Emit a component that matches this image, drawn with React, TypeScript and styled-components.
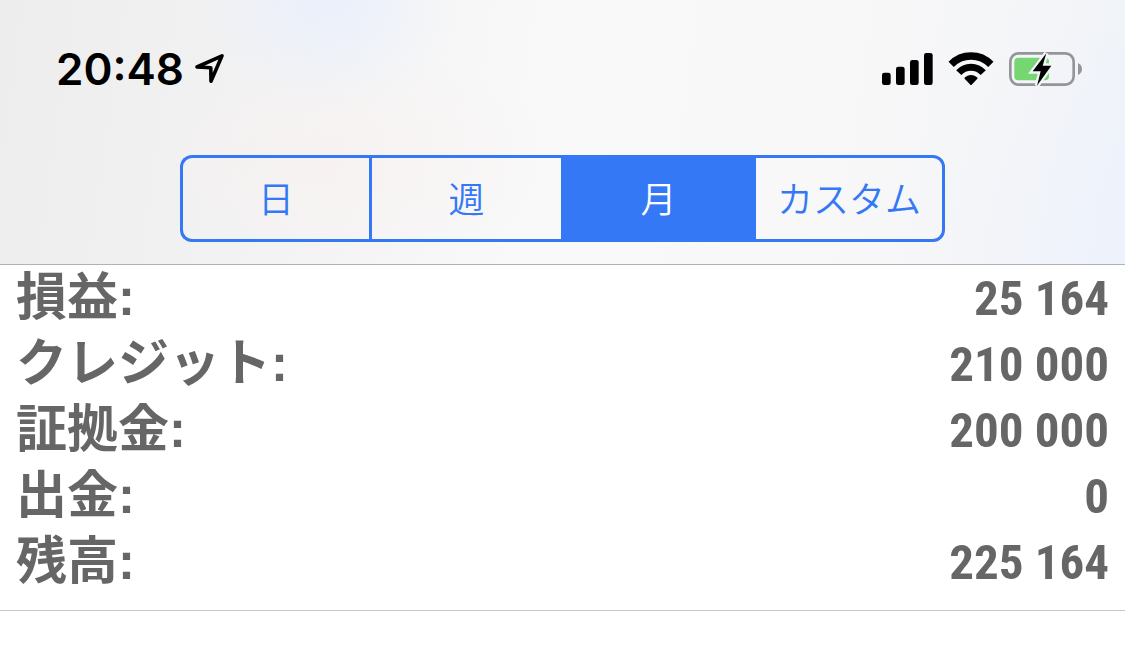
import React, { useState } from "react";
import styled, { createGlobalStyle, css } from "styled-components";

const BLUE = "#3478f6";

const GlobalStyle = createGlobalStyle`
  *, *::before, *::after { box-sizing: border-box; }
  body { margin: 0; background: #fff; }
`;

const Header = styled.header`
  height: 265px;
  border-bottom: 1px solid #b2b2b2;
  background:
    radial-gradient(ellipse 130px 110px at 330px 0, rgba(230, 238, 255, 0.7), transparent),
    radial-gradient(ellipse 220px 110px at 340px 160px, rgba(250, 240, 237, 0.5), transparent),
    radial-gradient(ellipse 200px 260px at 100% 100%, rgba(236, 241, 253, 0.6), transparent),
    linear-gradient(98deg, #ededed 0%, #f2f2f3 22%, #f9f9f9 48%, #f8f8f8 72%, #f4f5f8 90%, #eff3f9 100%);
`;

const StatusBar = styled.div`
  display: flex;
  align-items: center;
  justify-content: space-between;
  height: 155px;
  padding: 0 42px 17px 56px;
`;

const StatusGroup = styled.div<{ $gap: number }>`
  display: flex;
  align-items: center;
  gap: ${(p) => p.$gap}px;
`;

const Clock = styled.time`
  font: 600 44px/54px Inter, sans-serif;
  color: #000;
`;

const Segments = styled.div`
  display: grid;
  grid-template-columns: 63fr 64fr 64fr 64fr;
  width: 68%;
  height: 87px;
  margin: 0 auto;
`;

const Segment = styled.button<{ $active: boolean }>`
  padding: 0 0 4px;
  border: 3px solid ${BLUE};
  border-right-width: 0;
  background: transparent;
  color: ${BLUE};
  font: 350 36px/48px "Noto Sans CJK JP", sans-serif;
  cursor: pointer;

  &:first-child { border-radius: 12px 0 0 12px; }
  &:last-child { border-right-width: 3px; border-radius: 0 12px 12px 0; }

  ${(p) => p.$active && css`
    background: ${BLUE};
    color: #fff;
  `}
`;

const Summary = styled.dl`
  margin: 0;
  padding: 0 16px 15px;
  border-bottom: 1px solid #c8c7cc;
  background: #fff;
  color: #666;
`;

const SummaryRow = styled.div`
  display: flex;
  align-items: baseline;
  justify-content: space-between;
  height: 66px;
`;

const Label = styled.dt`
  font: 700 51px/66px "Liberation Sans", "Noto Sans CJK JP", sans-serif;
`;

const Amount = styled.dd`
  margin: 0;
  font: 700 49px/66px "Roboto Condensed", "Liberation Sans Narrow", "Liberation Sans", sans-serif;
`;

const LocationIcon = () => (
  <svg width="32" height="32" viewBox="0 0 32 32" aria-hidden="true">
    <path d="M4 14 29 2.8 18 28.2 17.8 14.8Z" fill="none" stroke="#000" strokeWidth="3.6" strokeLinejoin="round" />
  </svg>
);

const SignalIcon = () => (
  <svg width="51" height="34" viewBox="0 0 153 102" role="img" aria-label="Signal">
    <rect x="0" y="62" width="26" height="37" rx="7" />
    <rect x="42" y="44" width="26" height="55" rx="7" />
    <rect x="84" y="24" width="26" height="75" rx="7" />
    <rect x="126" y="3" width="26" height="96" rx="7" />
  </svg>
);

const WifiIcon = () => (
  <svg width="46" height="34" viewBox="0 0 138 102" role="img" aria-label="Wi-Fi">
    <path d="M9.5 37.2A83 83 0 0 1 128.5 37.2" fill="none" stroke="#000" strokeWidth="22" />
    <path d="M32.2 62A50 50 0 0 1 105.8 62" fill="none" stroke="#000" strokeWidth="21" />
    <path d="M50 80Q48 78 51 76Q69 62 87 76Q90 78 88 80L71 98Q69 100 67 98Z" />
  </svg>
);

const BatteryIcon = () => (
  <svg width="74" height="34" viewBox="0 0 222 102" role="img" aria-label="Charging">
    <rect x="4" y="4" width="190" height="94" rx="25" fill="none" stroke="#949599" strokeWidth="8" />
    <path d="M207 33Q219 39 219 51T207 69Z" fill="#949599" />
    <rect x="16" y="17" width="104" height="68" rx="12" fill="#75d672" />
    <path d="M112 4 71 58H95L84 101 127 41H101Z" fill="#000" stroke="#f3f5f8" strokeWidth="14" paintOrder="stroke" />
  </svg>
);

const periods = ["日", "週", "月", "カスタム"];

const totals = [
  ["損益", "25 164"],
  ["クレジット", "210 000"],
  ["証拠金", "200 000"],
  ["出金", "0"],
  ["残高", "225 164"],
];

export default function App() {
  const [period, setPeriod] = useState("月");

  return (
    <>
      <GlobalStyle />
      <Header>
        <StatusBar>
          <StatusGroup $gap={9}>
            <Clock>20:48</Clock>
            <LocationIcon />
          </StatusGroup>
          <StatusGroup $gap={15}>
            <SignalIcon />
            <WifiIcon />
            <BatteryIcon />
          </StatusGroup>
        </StatusBar>
        <Segments role="group">
          {periods.map((p) => (
            <Segment key={p} type="button" $active={p === period} aria-pressed={p === period} onClick={() => setPeriod(p)}>
              {p}
            </Segment>
          ))}
        </Segments>
      </Header>
      <main>
        <Summary>
          {totals.map(([label, amount]) => (
            <SummaryRow key={label}>
              <Label>{label}:</Label>
              <Amount>{amount}</Amount>
            </SummaryRow>
          ))}
        </Summary>
      </main>
    </>
  );
}
